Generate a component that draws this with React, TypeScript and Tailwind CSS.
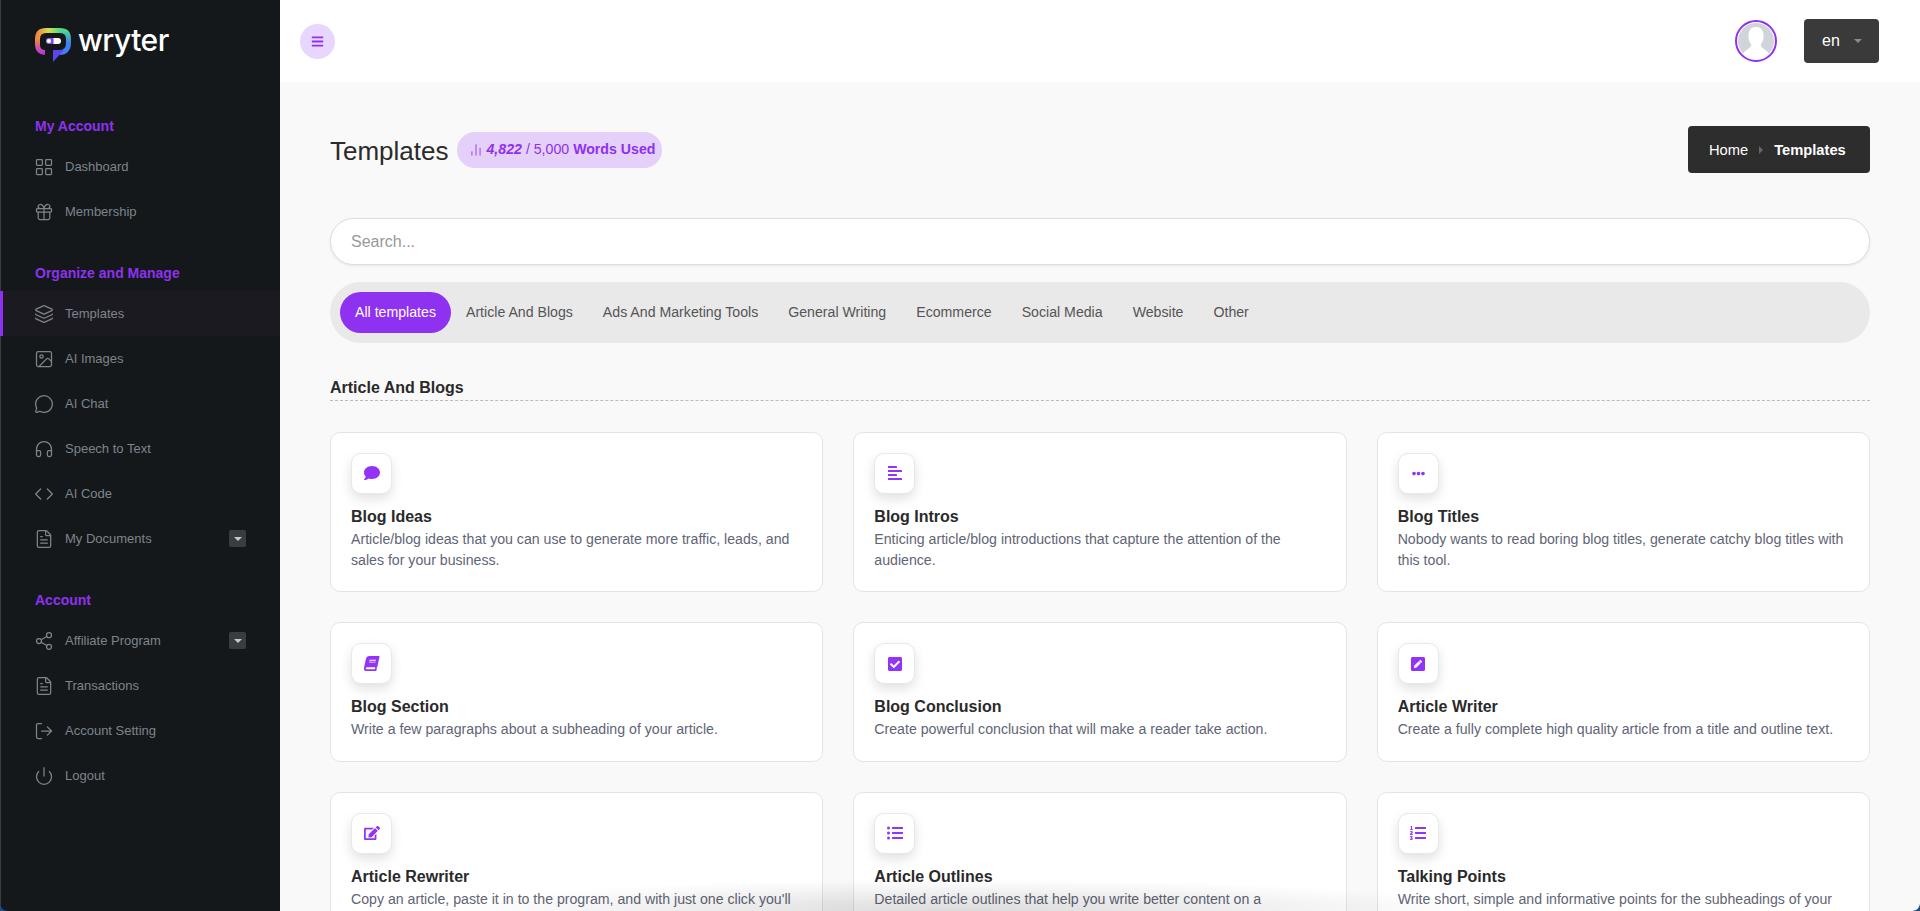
import type { ReactNode } from 'react';
import {
  LayoutGrid,
  Gift,
  Layers,
  Image,
  MessageCircle,
  Headphones,
  Code,
  FileText,
  Share2,
  LogOut,
  Power,
  ChartNoAxesColumn,
} from 'lucide-react';
import {
  FaBars,
  FaComment,
  FaAlignLeft,
  FaEllipsisH,
  FaBook,
  FaCheckSquare,
  FaPenSquare,
  FaEdit,
  FaListUl,
  FaListOl,
} from 'react-icons/fa';

const navGroups = [
  {
    label: 'My Account',
    items: [
      { name: 'Dashboard', icon: LayoutGrid },
      { name: 'Membership', icon: Gift },
    ],
  },
  {
    label: 'Organize and Manage',
    items: [
      { name: 'Templates', icon: Layers, active: true },
      { name: 'AI Images', icon: Image },
      { name: 'AI Chat', icon: MessageCircle },
      { name: 'Speech to Text', icon: Headphones },
      { name: 'AI Code', icon: Code },
      { name: 'My Documents', icon: FileText, caret: true },
    ],
  },
  {
    label: 'Account',
    items: [
      { name: 'Affiliate Program', icon: Share2, caret: true },
      { name: 'Transactions', icon: FileText },
      { name: 'Account Setting', icon: LogOut },
      { name: 'Logout', icon: Power },
    ],
  },
];

const tabs = [
  'Article And Blogs',
  'Ads And Marketing Tools',
  'General Writing',
  'Ecommerce',
  'Social Media',
  'Website',
  'Other',
];

const templates: { title: string; text: string; icon: ReactNode }[] = [
  {
    title: 'Blog Ideas',
    text: 'Article/blog ideas that you can use to generate more traffic, leads, and sales for your business.',
    icon: <FaComment size={16} />,
  },
  {
    title: 'Blog Intros',
    text: 'Enticing article/blog introductions that capture the attention of the audience.',
    icon: <FaAlignLeft size={16} />,
  },
  {
    title: 'Blog Titles',
    text: 'Nobody wants to read boring blog titles, generate catchy blog titles with this tool.',
    icon: <FaEllipsisH size={13} />,
  },
  {
    title: 'Blog Section',
    text: 'Write a few paragraphs about a subheading of your article.',
    icon: <FaBook size={15} className="-skew-x-12" />,
  },
  {
    title: 'Blog Conclusion',
    text: 'Create powerful conclusion that will make a reader take action.',
    icon: <FaCheckSquare size={16} />,
  },
  {
    title: 'Article Writer',
    text: 'Create a fully complete high quality article from a title and outline text.',
    icon: <FaPenSquare size={16} />,
  },
  {
    title: 'Article Rewriter',
    text: "Copy an article, paste it in to the program, and with just one click you'll have an entirely different article to read.",
    icon: <FaEdit size={16} />,
  },
  {
    title: 'Article Outlines',
    text: 'Detailed article outlines that help you write better content on a consistent basis.',
    icon: <FaListUl size={16} />,
  },
  {
    title: 'Talking Points',
    text: 'Write short, simple and informative points for the subheadings of your article.',
    icon: <FaListOl size={16} />,
  },
];

function Logo() {
  return (
    <div className="flex items-start">
      <svg width="36" height="34" viewBox="0 0 36 34" fill="none">
        <defs>
          <linearGradient id="lgLeft" x1="0" y1="1" x2="0" y2="0">
            <stop offset="0" stopColor="#b93ad6" />
            <stop offset="1" stopColor="#f08a3c" />
          </linearGradient>
          <linearGradient id="lgTop" x1="0" y1="0" x2="1" y2="0">
            <stop offset="0" stopColor="#f08a3c" />
            <stop offset="0.5" stopColor="#d8dc4e" />
            <stop offset="1" stopColor="#4fd88a" />
          </linearGradient>
          <linearGradient id="lgRight" x1="0" y1="0" x2="0" y2="1">
            <stop offset="0" stopColor="#4fd88a" />
            <stop offset="1" stopColor="#3f7ff0" />
          </linearGradient>
          <linearGradient id="lgBottom" x1="1" y1="0" x2="0" y2="0">
            <stop offset="0" stopColor="#3f6ff0" />
            <stop offset="0.5" stopColor="#6a3df0" />
            <stop offset="1" stopColor="#b93ad6" />
          </linearGradient>
          <linearGradient id="lgPill" x1="0" y1="0" x2="1" y2="0">
            <stop offset="0" stopColor="#a78bfa" />
            <stop offset="0.45" stopColor="#7c3aed" />
            <stop offset="0.55" stopColor="#ffffff" />
            <stop offset="1" stopColor="#ffffff" />
          </linearGradient>
        </defs>
        <path d="M10 24.500C5.500 24.500 2.500 21.500 2.500 17V11" stroke="url(#lgLeft)" strokeWidth="5" />
        <path d="M2.500 11C2.500 5.500 5.500 2.500 11 2.500H25" stroke="url(#lgTop)" strokeWidth="5" />
        <path d="M25 2.500C30.500 2.500 33.500 5.500 33.500 11V15" stroke="url(#lgRight)" strokeWidth="5" />
        <path d="M33.500 15C33.500 21 30 24.500 25 24.500" stroke="#3f7ff0" strokeWidth="5" />
        <path d="M10 24.500H19" stroke="url(#lgBottom)" strokeWidth="5" />
        <path d="M18 22H29L18 34Z" fill="#5a45ee" />
        <rect x="11" y="10" width="15" height="6" rx="3" fill="url(#lgPill)" />
        <circle cx="14" cy="13" r="2" fill="#ffffff" />
      </svg>
      <span className="ml-[7px] font-['Inter',sans-serif] text-[30px] font-[450] leading-[24px] tracking-[-0.5px] text-white">
        wryter
      </span>
    </div>
  );
}

function Sidebar() {
  return (
    <aside className="w-[280px] shrink-0 h-full bg-[#14181a] border-l border-[#3a3d40]">
      <div className="h-[116px] pl-[34px] pt-[28px]">
        <Logo />
      </div>
      {navGroups.map((group) => (
        <div key={group.label} className="mb-[29px]">
          <div className="h-5 mb-2 pl-[34px] text-sm font-bold leading-5 text-[#8f31f0]">
            {group.label}
          </div>
          {group.items.map((item) => {
            const Icon = item.icon;
            return (
              <div
                key={item.name}
                className={
                  item.active
                    ? 'relative flex items-center h-[45px] pl-[33px] pr-[34px] bg-[#1c1a21] text-[#7e848b]'
                    : 'relative flex items-center h-[45px] pl-[33px] pr-[34px] text-[#7e848b]'
                }
              >
                {item.active && <span className="absolute -left-px top-0 bottom-0 w-[3px] bg-[#8f31f0]" />}
                <Icon size={20} strokeWidth={1.5} className="shrink-0" />
                <span className="ml-[11px] text-[13px]">{item.name}</span>
                {item.caret && (
                  <span className="ml-auto flex h-[17px] w-[17px] items-center justify-center rounded-[2px] bg-[#3a3d40]">
                    <span className="border-x-[4px] border-t-[4px] border-x-transparent border-t-[#c8c8c8]" />
                  </span>
                )}
              </div>
            );
          })}
        </div>
      ))}
    </aside>
  );
}

function Avatar() {
  return (
    <div className="h-[42px] w-[42px] rounded-full border-2 border-[#8f31f0] bg-white p-[1px]">
      <svg viewBox="0 0 36 36" className="h-full w-full rounded-full bg-[#d1d5db]">
        <path
          d="M18 4C12 4 10 9 10.500 14C10.800 18 12 20 13.500 22C13 25 7 27 4 32V36H32V32C29 27 23 25 22.500 22C24 20 25.200 18 25.500 14C26 9 24 4 18 4Z"
          fill="#ffffff"
        />
      </svg>
    </div>
  );
}

function TemplateCard({ title, text, icon }: { title: string; text: string; icon: ReactNode }) {
  return (
    <div className="rounded-[10px] border border-[#e3e4e8] bg-white p-5 pb-[20.5px]">
      <div className="flex h-[41px] w-[41px] items-center justify-center rounded-[10px] border border-[#e8e8e8] bg-white text-[#9333f5] shadow-[0_5px_12px_rgba(0,0,0,0.12)]">
        {icon}
      </div>
      <h3 className="mt-[11px] text-base font-bold leading-6 text-[#2a2a2a]">{title}</h3>
      <p className="text-[14.15px] leading-[21px] text-[#5f6575]">{text}</p>
    </div>
  );
}

export default function App() {
  return (
    <div className="relative flex h-screen overflow-hidden bg-[#f9f9f9] font-['Liberation_Sans',Arial,sans-serif]">
      <Sidebar />
      <div className="flex-1 min-w-0">
        <header className="flex h-[82px] items-center bg-white pl-5 pr-[41px]">
          <button className="flex h-[35px] w-[35px] items-center justify-center rounded-full bg-[#e8d6fe] text-[#8f31f0]">
            <FaBars size={13} />
          </button>
          <div className="ml-auto flex items-center gap-[27px]">
            <Avatar />
            <button className="flex h-11 w-[75px] items-center rounded-[4px] bg-[#3a3a3a] pl-[18px] text-base text-white">
              en
              <span className="ml-[14px] border-x-[4px] border-t-[4px] border-x-transparent border-t-[#8a8a8a]" />
            </button>
          </div>
        </header>

        <main className="px-[50px] pt-[44px]">
          <div className="flex items-center h-[47px]">
            <h1 className="text-[26px] font-normal leading-none text-[#2b2b2b] pt-[2px]">Templates</h1>
            <div className="ml-[8px] flex h-9 items-center rounded-full bg-[#e4d0f8] pl-[12px] pr-[7px] text-[14.15px] text-[#8f31f0]">
              <ChartNoAxesColumn size={14} strokeWidth={1.5} />
              <span className="ml-[4px] font-bold italic">4,822</span>
              <span className="ml-1">/ 5,000</span>
              <span className="ml-1 font-bold">Words Used</span>
            </div>
            <div className="ml-auto flex h-[47px] w-[182px] items-center rounded-[4px] bg-[#2d2d2d] pl-[21px] pt-px text-[14.7px] text-white">
              Home
              <span className="mx-[11px] border-y-[4px] border-l-[4px] border-y-transparent border-l-[#666666]" />
              <span className="font-bold">Templates</span>
            </div>
          </div>

          <input
            type="text"
            placeholder="Search..."
            className="mt-[45px] block h-[47px] w-full rounded-full border border-[#dddddd] bg-white px-5 text-base shadow-[0_1px_3px_rgba(0,0,0,0.08)] outline-none placeholder:text-[#999999]"
          />

          <div className="mt-[17px] flex h-[61px] items-center rounded-full bg-[#e9e9e9] pl-[10px] text-[14.15px] text-[#555555]">
            <span className="flex h-[41px] items-center rounded-full bg-[#8f31f0] px-[15px] text-white">
              All templates
            </span>
            {tabs.map((tab) => (
              <span key={tab} className="px-[15px]">
                {tab}
              </span>
            ))}
          </div>

          <h2 className="mt-[33px] border-b border-dashed border-[#bbbbbb] text-base font-bold leading-6 text-[#2a2a2a]">
            Article And Blogs
          </h2>

          <div className="mt-[30.5px] grid grid-cols-3 gap-[30px]">
            {templates.map((t) => (
              <TemplateCard key={t.title} title={t.title} text={t.text} icon={t.icon} />
            ))}
          </div>
        </main>
      </div>

      {/* window shadow and corners along the bottom of the capture */}
      <div className="pointer-events-none absolute inset-x-0 bottom-0 h-8 bg-[radial-gradient(ellipse_520px_32px_at_50%_100%,rgba(0,0,0,0.14),transparent)]" />
      <svg width="8" height="8" viewBox="0 0 8 8" className="absolute bottom-0 left-0">
        <path d="M8 8H0V0C0 4.400 3.600 8 8 8Z" fill="#274a80" />
      </svg>
      <svg width="8" height="8" viewBox="0 0 8 8" className="absolute bottom-0 right-0">
        <path d="M0 8H8V0C8 4.400 4.400 8 0 8Z" fill="#274a80" />
      </svg>
    </div>
  );
}
